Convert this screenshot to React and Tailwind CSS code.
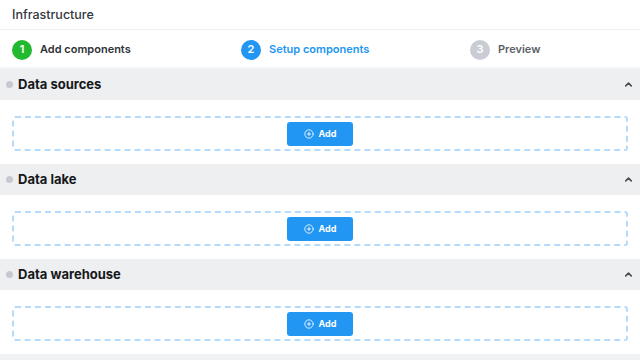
import { ChevronUp, CirclePlus } from 'lucide-react'

const steps = [
  { n: 1, label: 'Add components', circle: 'bg-[#22b92f] text-white', text: 'text-[#2f3437]' },
  { n: 2, label: 'Setup components', circle: 'bg-[#2196f3] text-white', text: 'text-[#2196f3]' },
  { n: 3, label: 'Preview', circle: 'bg-[#c9cdd3] text-white', text: 'text-[#5b6066]' },
]

const sections = ['Data sources', 'Data lake', 'Data warehouse']

function Section({ title }) {
  return (
    <div>
      <div className="flex h-[31px] items-center justify-between bg-[#eeeff1] pl-[6px] pr-[6px]">
        <div className="flex items-center gap-[5px]">
          <span className="h-[7px] w-[7px] rounded-full bg-[#c5cad1]" />
          <span className="text-[13px] font-bold text-[#16181a]">{title}</span>
        </div>
        <ChevronUp size={11} strokeWidth={3.5} className="text-[#474c53]" />
      </div>
      <div className="h-[64px] px-[12px] pt-[16px]">
        <div className="flex h-[35px] items-center justify-center rounded-[3px] border-2 border-dashed border-[#b5dbfc]">
          <button className="flex h-[24px] w-[66px] items-center justify-center gap-[5px] rounded-[3px] bg-[#2196f3] text-[9px] font-bold text-white">
            <CirclePlus size={10} strokeWidth={2} />
            Add
          </button>
        </div>
      </div>
    </div>
  )
}

export default function App() {
  return (
    <div className="h-[360px] w-[640px] overflow-hidden bg-white font-['Inter',sans-serif]">
      <div className="flex h-[30px] items-center border-b border-[#f0f1f3] px-[12px] pt-[2px]">
        <h1 className="text-[12.5px] font-medium text-[#33383d]">Infrastructure</h1>
      </div>
      <div className="flex h-[37px] items-center pl-[12px] pt-[2px]">
        {steps.map((s) => (
          <div key={s.n} className="flex w-[229px] shrink-0 items-center gap-[8px]">
            <span className={`flex h-[20px] w-[20px] items-center justify-center rounded-full text-[11px] font-semibold ${s.circle}`}>
              {s.n}
            </span>
            <span className={`text-[11px] font-semibold ${s.text}`}>{s.label}</span>
          </div>
        ))}
      </div>
      <div className="h-[2px] bg-[#f4f5f7]" />
      {sections.map((t) => (
        <Section key={t} title={t} />
      ))}
      <div className="h-[31px] bg-[#f1f2f4]" />
    </div>
  )
}
